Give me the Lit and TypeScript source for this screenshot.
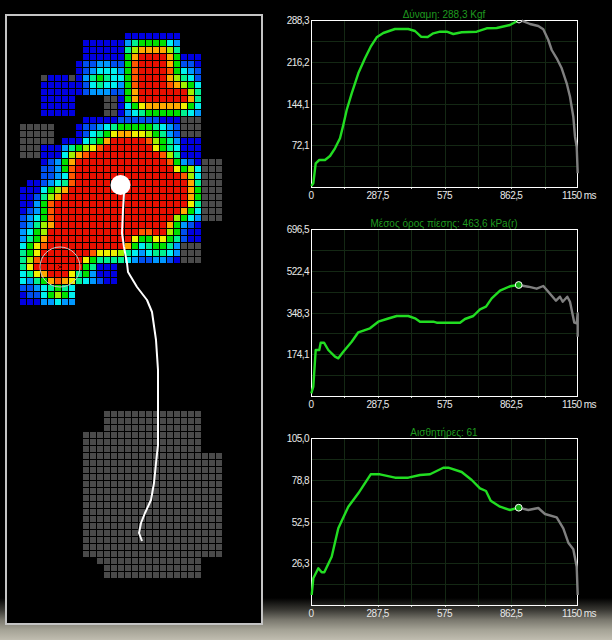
import { LitElement, html, css, svg } from "lit";
import { customElement } from "lit/decorators.js";

const R = (n: number) => "R".repeat(n);
const B6 = "BBBBBB";

// One string per row of the sensor map; "." keeps a column empty.
const ROWS: string[] = [
  "...............BBBBBBBB",
  "........." + B6 + "ltggggcl",
  "........." + B6 + "tyooooyt",
  "........." + B6 + "go" + R(4) + "ogBBB",
  "........BbbllbbgO" + R(4) + "ogbbB",
  "........BblccclgO" + R(4) + "Ogclb",
  "...GBBBGBltgtccgO" + R(4) + "oytcb",
  "..." + B6 + "bctcclgO" + R(4) + "Ooygc",
  "..." + B6 + "blllbbgo" + R(7) + "yt",
  "...BBBBB....GGBgo" + R(7) + "ot",
  "...BBBBB....GGBcgYoooooYgc",
  "...BBBBB....GGBlctgggggtcl",
  ".........BBBBBbbbbbbBBBGGG",
  "GGGGG...BbblctgggggtclbGGG",
  "GGGGG...BbctgYooYYygtlbGGG",
  "GGGGG.BBBctgo" + R(5) + "OygtlBBB",
  "GGGBBBltgyYO" + R(7) + "YgtcBBB",
  "GGGBBBcyoO" + R(10) + "OytBBB",
  "...Bblgo" + R(13) + "OglbBGGG",
  "...bblgO" + R(14) + "YgycGGG",
  "...bblcO" + R(15) + "OycGGG",
  ".BBblctO" + R(16) + "otGGG",
  "BBBcgyo" + R(17) + "ogGGG",
  "BBbtyo" + R(18) + "ogGGG",
  "BBlgO" + R(19) + "YtGGG",
  "BblgO" + R(18) + "ogcGGG",
  "blcgO" + R(17) + "ygclGGG",
  "bltyo" + R(16) + "oglbB",
  "lcgy" + R(13) + "OO" + R(2) + "ygbBB",
  "ltgo" + R(12) + "YggYYgtbBB",
  "cgYO" + R(11) + "ogctggtlGGG",
  "tgYR" + R(6) + "OYYYytclcttclGGG",
  "tyO" + R(6) + "YgttttclbbllbBGGG",
  "tYR" + R(6) + "gtBBB",
  "ctYo" + R(3) + "YtglBBB",
  "cltgoOoYtclbBB",
  "bblctgtc",
  "Bbbcgygc",
  "BBBllcll",
];

const GRAY: [number, number, number][] = [
  [54, 12, 25], [55, 12, 25], [56, 12, 25],
  [57, 9, 25], [58, 9, 25], [59, 9, 25],
  ...Array.from({ length: 15 }, (_, i): [number, number, number] => [60 + i, 9, 28]),
  [75, 11, 25], [76, 12, 25], [77, 12, 25],
];

const cellList = (): string[] => {
  const out: string[] = [];
  for (let r = 0; r < 78; r++) {
    const row = ROWS[r] ?? "";
    const span = GRAY.find((g) => g[0] === r);
    for (let c = 0; c < 29; c++) {
      let ch = row[c] ?? ".";
      if (span && c >= span[1] && c <= span[2]) ch = "G";
      out.push(ch);
    }
  }
  return out;
};

type Pt = [number, number];
const toPts = (p: Pt[], dy: number) =>
  p.map(([x, y]) => `${(x / 3).toFixed(1)},${(y / 3 + dy).toFixed(1)}`).join(" ");

interface Chart {
  title: string;
  ticks: string[];
  dy: number;
  green: Pt[];
  gray: Pt[];
  marker: Pt;
}

const CHARTS: Chart[] = [
  {
    title: "Δύναμη: 288,3 Kgf",
    ticks: ["288,3", "216,2", "144,1", "72,1"],
    dy: 0,
    green: [[94,558],[100,550],[107,490],[118,480],[135,480],[150,468],[165,445],[180,415],[190,375],[200,330],[215,280],[235,220],[255,175],[272,140],[290,112],[310,99],[345,87],[385,87],[405,93],[423,110],[443,111],[460,100],[480,95],[500,95],[520,102],[545,97],[590,95],[620,85],[650,84],[690,75],[712,63]],
    gray: [[725,62],[750,72],[775,78],[790,88],[805,120],[815,150],[830,175],[845,205],[860,250],[870,290],[880,350],[885,410],[890,440],[893,520]],
    marker: [718, 55],
  },
  {
    title: "Μέσος όρος πίεσης: 463,6 kPa(r)",
    ticks: ["696,5", "522,4", "348,3", "174,1"],
    dy: 1,
    green: [[94,550],[100,530],[107,420],[118,420],[122,398],[132,398],[145,420],[165,440],[175,445],[190,425],[215,395],[235,367],[270,355],[295,335],[320,327],[350,318],[385,318],[405,325],[420,335],[460,335],[470,338],[540,338],[555,327],[580,318],[600,298],[618,290],[635,265],[660,242],[690,229],[715,225]],
    gray: [[715,225],[745,230],[770,236],[790,228],[805,245],[828,272],[840,260],[848,275],[862,260],[870,275],[883,338],[890,340],[893,310],[893,380]],
    marker: [716, 225],
  },
  {
    title: "Αισθητήρες: 61",
    ticks: ["105,0", "78,8", "52,5", "26,3"],
    dy: 2,
    green: [[95,525],[100,475],[115,445],[125,457],[133,457],[155,410],[175,325],[205,260],[235,220],[272,163],[300,163],[345,173],[385,173],[420,165],[450,163],[490,143],[505,143],[545,156],[575,180],[600,205],[618,213],[632,242],[660,260],[690,270],[715,263]],
    gray: [[715,263],[745,270],[775,264],[795,282],[830,292],[850,325],[865,368],[880,388],[890,440],[893,525]],
    marker: [716, 263],
  },
];

const L = 31, T = 20, W = 267, H = 167;

@customElement("app-root")
export class AppRoot extends LitElement {
  static styles = css`
    :host { display: block; width: 612px; height: 640px; overflow: hidden; }
    .page {
      width: 612px; height: 640px; box-sizing: border-box;
      display: flex; align-items: flex-start;
      padding: 14px 0 0 5px;
      background: linear-gradient(to bottom, #000 0, #000 598px, #3a3934 610px, #7a786e 620px, #a5a396 630px, #c0bdb0 640px);
    }
    .panel {
      width: 258px; height: 611px; box-sizing: border-box; flex: none;
      border: 2px solid #c4c4c4; background: #000; position: relative;
      padding: 17px 0 0 13px;
    }
    .grid { display: grid; grid-template-columns: repeat(29, 6px); grid-auto-rows: 6px; gap: 1px; }
    .overlay { position: absolute; left: -7px; top: -16px; width: 258px; height: 611px; overflow: visible; }
    .B { background: #0000e0; } .b { background: #0050f0; } .l { background: #0098ff; }
    .c { background: #00f0f0; } .t { background: #00f090; } .g { background: #00e000; }
    .y { background: #a0f000; } .Y { background: #f0f000; } .o { background: #ffa800; }
    .O { background: #ff5800; } .R { background: #e81000; } .G { background: #4a4a4a; }
    .charts { margin: -14px 0 0 17px; display: flex; flex-direction: column; }
    svg.chart { display: block; width: 332px; height: 209px; overflow: hidden; }
    .title { font: 10px "Liberation Sans", sans-serif; fill: #1f9a1f; text-anchor: middle; }
    .lab { font: 10px "Liberation Sans", sans-serif; fill: #e8e8e8; letter-spacing: -0.55px; }
    .end { text-anchor: end; } .mid { text-anchor: middle; }
    .gridline { stroke: #142814; stroke-width: 1; }
    .tick { stroke: #c8c8c8; stroke-width: 1; }
    .frame { fill: none; stroke: #fff; stroke-width: 1; }
    .green { fill: none; stroke: #22dd22; stroke-width: 2.4; stroke-linejoin: round; }
    .gray { fill: none; stroke: #808080; stroke-width: 2.4; stroke-linejoin: round; }
    .marker { fill: #12a812; stroke: #fff; stroke-width: 1; }
    .trail { fill: none; stroke: #fff; stroke-width: 2; stroke-linejoin: round; }
    .start { fill: #fff; }
    .ring { fill: none; stroke: #c8c8c8; stroke-width: 1; }
    .cross { stroke: #600; stroke-width: 1; }
  `;

  private chart(c: Chart) {
    const v = [1, 2, 3, 4, 5, 6, 7].map((k) => L + Math.round((k * W) / 8) + 0.5);
    const h = [1, 2, 3, 4, 5, 6, 7].map((k) => T + Math.round((k * H) / 8) + 0.5);
    const xLabs = ["0", "287,5", "575", "862,5"];
    return html`<svg class="chart" viewBox="0 0 332 209">
      <text class="title" x="${L + W / 2 - 0.5}" y="18">${c.title}</text>
      ${v.map((x) => svg`<line class="gridline" x1=${x} x2=${x} y1=${T} y2=${T + H}></line>
        <line class="tick" x1=${x} x2=${x} y1=${T + H} y2=${T + H + 2}></line>`)}
      ${h.map((y) => svg`<line class="gridline" x1=${L} x2=${L + W} y1=${y} y2=${y}></line>`)}
      <rect class="frame" x="${L + 0.5}" y="${T + 0.5}" width="${W - 1}" height="${H}"></rect>
      ${c.ticks.map((t, i) => svg`<text class="lab end" x="29" y="${T + 4 + (i * H) / 4}">${t}</text>`)}
      ${xLabs.map((t, i) => svg`<text class="lab mid" x="${L + (i * W) / 4}" y="${T + H + 12}">${t}</text>`)}
      <text class="lab mid" x="${L + W + 1}" y="${T + H + 12}">1150 ms</text>
      <polyline class="gray" points="${toPts(c.gray, c.dy)}"></polyline>
      <polyline class="green" points="${toPts(c.green, c.dy)}"></polyline>
      ${c.dy > 0
        ? svg`<circle class="marker" cx="${(c.marker[0] / 3).toFixed(1)}" cy="${(c.marker[1] / 3 + c.dy).toFixed(1)}" r="3.4"></circle>`
        : svg`<path class="frame" d="M236 21.500l3 1.500l3-1.500"></path>`}
    </svg>`;
  }

  render() {
    const trail = "124,193 123,210 122,233 124,247 127,263 128,272 137,287 147,300 152,312 156,340 158,370 158,445 156,463 154,483 151,500 145,513 141,523 139,533 142,541";
    return html`<div class="page">
      <div class="panel">
        <div class="grid">${cellList().map((ch) => html`<span class=${ch === "." ? "" : ch}></span>`)}</div>
        <svg class="overlay" viewBox="0 0 258 611">
          <circle class="ring" cx="60" cy="267" r="20"></circle>
          <path class="cross" d="M58 265l4 4m0-4l-4 4"></path>
          <polyline class="trail" points="${trail}"></polyline>
          <circle class="start" cx="120.500" cy="185" r="10"></circle>
        </svg>
      </div>
      <div class="charts">${CHARTS.map((c) => this.chart(c))}</div>
    </div>`;
  }
}
